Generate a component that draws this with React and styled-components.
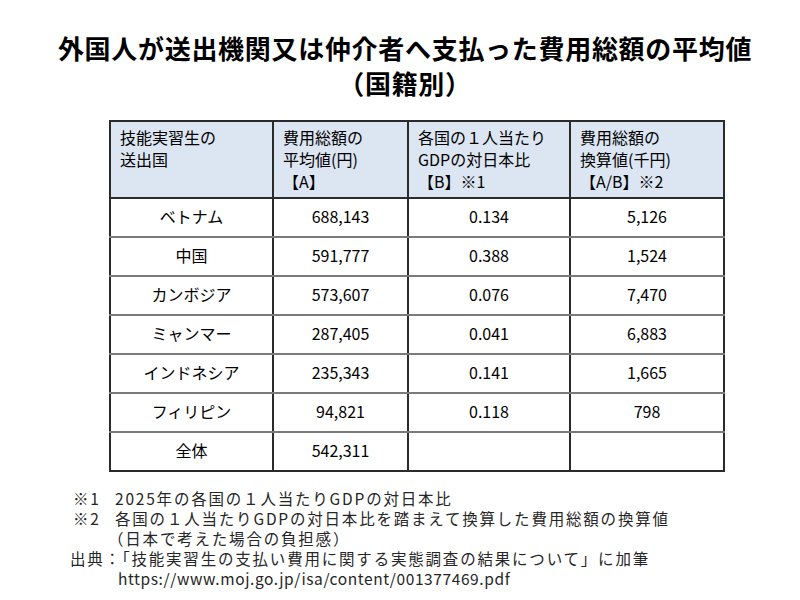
import styled, { createGlobalStyle } from 'styled-components';

const GlobalStyle = createGlobalStyle`
    html, body {
        margin: 0;
        padding: 0;
        background: #ffffff;
    }
    body {
        font-family: "Noto Sans CJK JP", "Noto Sans", sans-serif;
        color: #000;
    }
`;

const Page = styled.div`
    width: 800px;
    height: 600px;
    box-sizing: border-box;
    padding-top: 30px;
    display: flex;
    flex-direction: column;
`;

const Title = styled.h1`
    margin: 0;
    text-align: center;
    font-size: 26px;
    font-weight: 700;
    line-height: 35px;
    letter-spacing: 0.7px;
    padding-left: 10px;
`;

const TableWrap = styled.div`
    padding-left: 109px;
    margin-top: 20px;
`;

const Table = styled.table`
    border-collapse: collapse;
    font-size: 16px;
    table-layout: fixed;
    width: 614px;
`;

const HeadCell = styled.th`
    background: #dce6f2;
    border: 2px solid #2b2b2b;
    text-align: left;
    vertical-align: top;
    font-weight: 400;
    line-height: 22px;
    padding: 4px 9px 5px;
    width: ${(p) => p.w}px;
    box-sizing: border-box;
`;

const Cell = styled.td`
    border-left: 2px solid #2b2b2b;
    border-right: 2px solid #2b2b2b;
    border-top: 2px solid #7a7a7a;
    border-bottom: 2px solid ${(p) => (p.last ? '#2b2b2b' : '#7a7a7a')};
    text-align: center;
    height: 33px;
    padding: 0 0 4px;
    line-height: 22px;
`;

const Notes = styled.div`
    margin-top: 16px;
    padding-left: 70px;
    font-size: 15.5px;
    letter-spacing: 1.8px;
    line-height: 20px;
    color: #262626;
`;

const NoteRow = styled.div`
    display: flex;
    padding-left: ${(p) => p.indent || 0}px;
    letter-spacing: ${(p) => (p.url ? '0.6px' : 'inherit')};
`;

const Mark = styled.span`
    width: 42px;
    flex: none;
`;

const header = [
    { w: 163, lines: ['技能実習生の', '送出国'] },
    { w: 135, lines: ['費用総額の', '平均値(円)', '【A】'] },
    { w: 162, lines: ['各国の１人当たり', 'GDPの対日本比', '【B】※1'] },
    { w: 154, lines: ['費用総額の', '換算値(千円)', '【A/B】※2'] },
];

const rows = [
    ['ベトナム', '688,143', '0.134', '5,126'],
    ['中国', '591,777', '0.388', '1,524'],
    ['カンボジア', '573,607', '0.076', '7,470'],
    ['ミャンマー', '287,405', '0.041', '6,883'],
    ['インドネシア', '235,343', '0.141', '1,665'],
    ['フィリピン', '94,821', '0.118', '798'],
    ['全体', '542,311', '', ''],
];

export default function App() {
    return (
        <Page>
            <GlobalStyle />
            <Title>
                外国人が送出機関又は仲介者へ支払った費用総額の平均値
                <br />
                （国籍別）
            </Title>
            <TableWrap>
                <Table>
                    <thead>
                        <tr>
                            {header.map((h, i) => (
                                <HeadCell key={i} w={h.w}>
                                    {h.lines.map((l, j) => (
                                        <div key={j}>{l}</div>
                                    ))}
                                </HeadCell>
                            ))}
                        </tr>
                    </thead>
                    <tbody>
                        {rows.map((r, i) => (
                            <tr key={i}>
                                {r.map((c, j) => (
                                    <Cell key={j} last={i === rows.length - 1}>
                                        {c}
                                    </Cell>
                                ))}
                            </tr>
                        ))}
                    </tbody>
                </Table>
            </TableWrap>
            <Notes>
                <NoteRow indent={3}>
                    <Mark>※1</Mark>
                    <span>2025年の各国の１人当たりGDPの対日本比</span>
                </NoteRow>
                <NoteRow indent={3}>
                    <Mark>※2</Mark>
                    <span>各国の１人当たりGDPの対日本比を踏まえて換算した費用総額の換算値</span>
                </NoteRow>
                <NoteRow indent={38}>（日本で考えた場合の負担感）</NoteRow>
                <NoteRow>出典：「技能実習生の支払い費用に関する実態調査の結果について」に加筆</NoteRow>
                <NoteRow indent={48} url>https://www.moj.go.jp/isa/content/001377469.pdf</NoteRow>
            </Notes>
        </Page>
    );
}
